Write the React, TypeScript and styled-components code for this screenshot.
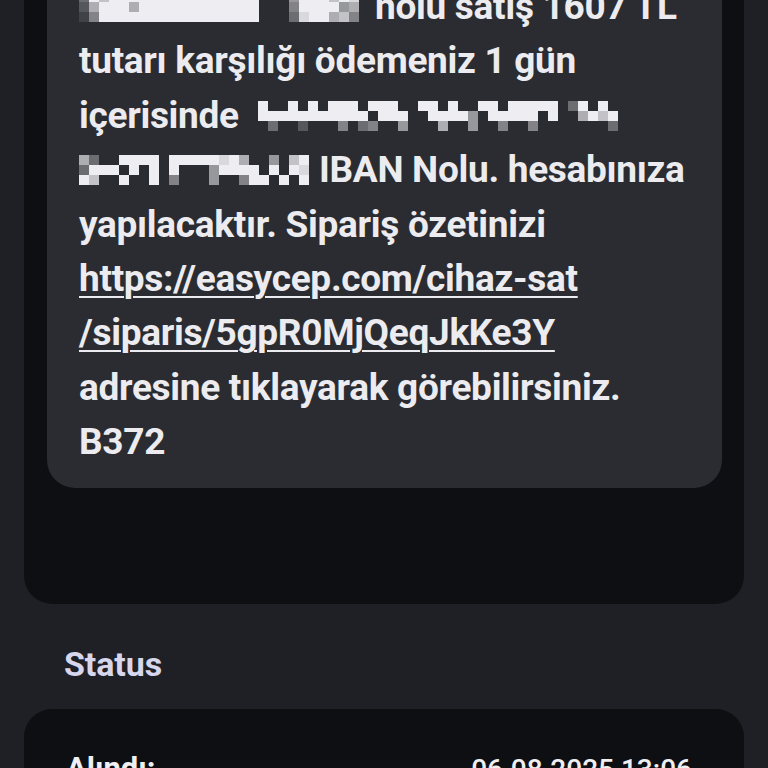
import React from "react";
import styled, { createGlobalStyle } from "styled-components";

const Global = createGlobalStyle`
  html, body { margin: 0; padding: 0; background: #1f2025; }
  body { font-family: Roboto, "Noto Sans", "Liberation Sans", sans-serif; overflow: hidden; }
  #root { width: 768px; height: 768px; overflow: hidden; }
`;

const Page = styled.div`
  padding: 0 24px;
  margin-top: -40px;
`;

const MessageCard = styled.div`
  background: #0e0f13;
  border-radius: 0 0 28px 28px;
  padding: 0 22px 116px 23px;
`;

const Bubble = styled.div`
  background: #2b2c31;
  border-radius: 0 0 28px 28px;
  padding: 20px 20px 18px 32px;
  color: #ececf0;
  font-size: 37px;
  font-weight: 700;
  line-height: 54.4px;
  letter-spacing: -0.3px;
`;

const Line = styled.div`
  white-space: nowrap;
`;

const Link = styled.span`
  text-decoration: underline;
  text-decoration-thickness: 2px;
  text-underline-offset: 5px;
`;

const SectionTitle = styled.h2`
  margin: 40px 0 25px;
  padding-left: 40px;
  font-size: 34px;
  font-weight: 700;
  line-height: 40px;
  color: #d7d6ec;
  letter-spacing: -0.1px;
`;

const StatusCard = styled.div`
  background: #0e0f13;
  border-radius: 28px 28px 0 0;
  padding: 42px 52px 40px 42px;
  height: 200px;
`;

const StatusRow = styled.div`
  display: flex;
  justify-content: space-between;
  align-items: baseline;
  color: #f0f0f3;
  line-height: 36px;
`;

const StatusLabel = styled.span`
  font-size: 31px;
  font-weight: 700;
`;

const StatusValue = styled.span`
  font-size: 28px;
  font-weight: 500;
`;

const MosaicSvg = styled.svg`
  display: inline-block;
  vertical-align: -3px;
`;

const BASE = [43, 44, 49];
const WHITE = [238, 238, 242];

function levelColor(ch: string): string | null {
  if (ch === ".") return null;
  const t = ch === "W" ? 1 : parseInt(ch, 10) / 9;
  const c = BASE.map((b, i) => Math.round(b + (WHITE[i] - b) * t));
  return `rgb(${c[0]},${c[1]},${c[2]})`;
}

function Mosaic({ rows, cell = 10, rowH = 10, gapRight = 0 }: { rows: string[]; cell?: number; rowH?: number; gapRight?: number }) {
  const cols = Math.max(...rows.map((r) => r.length));
  const w = cols * cell;
  const h = rows.length * rowH;
  return (
    <MosaicSvg width={w} height={h} viewBox={`0 0 ${w} ${h}`} style={{ marginRight: gapRight }} aria-hidden>
      {rows.flatMap((r, y) =>
        r.split("").map((ch, x) => {
          const fill = levelColor(ch);
          return fill ? <rect key={`${x}-${y}`} x={x * cell} y={y * rowH} width={cell} height={rowH} fill={fill} /> : null;
        })
      )}
    </MosaicSvg>
  );
}

const mosaic1 = [
  "3W7W9WWWWWWWWWWWWW...5W9W7W8",
  "26W9W6WWWWWWWWWWWW...49WWW56",
  "14WWW9WWWWWWWWWWWW...38WW674",
];

const mosaic3 = [
  ".W..W.W.WWW.WWW..WW.W..WW.WWWWW.3W.W",
  ".WWWWWWWWWWW.WWW..WWWW5.WWWWW.W..6W7W",
  "..3..2...4.34..5...6..5..4..4.......3",
];

const mosaic4 = [
  "63..WWWW.WWWWW8W6..5.7W",
  "3WWW.W.W.W...5WWWW.W.W8",
  "W7..W..W.4...5..4WW.W.W",
];

export default function App() {
  return (
    <>
      <Global />
      <Page>
        <MessageCard>
          <Bubble>
            <Line>
              <Mosaic rows={mosaic1} gapRight={16} />nolu satış 1607 TL
            </Line>
            <Line>tutarı karşılığı ödemeniz 1 gün</Line>
            <Line>
              içerisinde <Mosaic rows={mosaic3} />
            </Line>
            <Line>
              <Mosaic rows={mosaic4} gapRight={10} />IBAN Nolu. hesabınıza
            </Line>
            <Line>yapılacaktır. Sipariş özetinizi</Line>
            <Line>
              <Link>https://easycep.com/cihaz-sat</Link>
            </Line>
            <Line>
              <Link>/siparis/5gpR0MjQeqJkKe3Y</Link>
            </Line>
            <Line>adresine tıklayarak görebilirsiniz.</Line>
            <Line>B372</Line>
          </Bubble>
        </MessageCard>
        <SectionTitle>Status</SectionTitle>
        <StatusCard>
          <StatusRow>
            <StatusLabel>Alındı:</StatusLabel>
            <StatusValue>06.08.2025 13:06</StatusValue>
          </StatusRow>
        </StatusCard>
      </Page>
    </>
  );
}
